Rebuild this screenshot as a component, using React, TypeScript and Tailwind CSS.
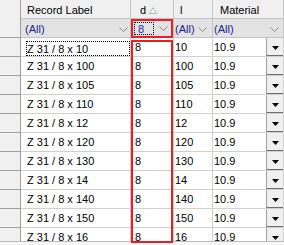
import React from "react";

const rows = ["10", "100", "105", "110", "12", "120", "130", "14", "140", "150", "16"];

const Chevron: React.FC = () => (
  <svg width="9" height="5" viewBox="0 0 9 5" className="shrink-0">
    <polyline points="0.5,0.5 4.5,4.5 8.5,0.5" fill="none" stroke="#8a8a8a" strokeWidth="1" />
  </svg>
);

const SortUp: React.FC = () => (
  <svg width="8" height="7" viewBox="0 0 8 7" className="ml-[3px] shrink-0">
    <polygon points="4,0.5 7.5,6.5 0.5,6.5" fill="#fcfcfc" stroke="#b4b4b4" strokeWidth="1" />
  </svg>
);

const DropButton: React.FC = () => (
  <div className="ml-auto w-[17px] self-stretch flex items-center justify-center bg-[#f0f0f0] border-l border-l-[#a0a0a0] border-b border-b-[#6e6e6e] pt-[2px]">
    <svg width="7" height="4" viewBox="0 0 7 4">
      <polygon points="0,0 7,0 3.5,4" fill="#000" />
    </svg>
  </div>
);

const App: React.FC = () => {
  return (
    <div className="relative w-[284px] h-[245px] overflow-hidden bg-[#f7f7f7] font-['Liberation_Sans',Arial,sans-serif] text-[11px] text-black leading-none">
      <div className="h-[242px] overflow-hidden bg-white border-b border-[#bdbdbd]">
        {/* header + filter rows */}
        <div className="flex">
          <div className="w-[21px] h-[38px] bg-[#f0f0f0] border-r border-b border-[#a0a0a0]" />
          <div className="flex flex-col">
            <div className="flex h-[19px] bg-[#f0f0f0]">
              <div className="w-[110px] flex items-center pl-[6px] pt-[2px] border-r border-b border-[#c4c4c4]">Record Label</div>
              <div className="w-[43px] flex items-center pl-[9px] pt-[2px] border-r border-b border-[#c4c4c4]">
                d<SortUp />
              </div>
              <div className="w-[39px] flex items-center pl-[6px] pt-[2px] border-r border-b border-[#c4c4c4]">l</div>
              <div className="w-[71px] flex items-center pl-[7px] pt-[2px] border-r border-b border-[#c4c4c4]">Material</div>
            </div>
            <div className="flex h-[19px] bg-[#e3e3e3] text-[#1c1c8e]">
              <div className="w-[110px] flex items-center justify-between pl-[4px] pr-[2px] pt-[2px] border-r border-b border-[#c4c4c4]">
                (All)<Chevron />
              </div>
              <div className="w-[43px] flex items-center justify-between pl-[3px] pr-[5px] border-r border-b border-[#c4c4c4]">
                <div className="w-[20px] h-[13px] flex items-center pl-[3px] pt-[2px] border border-dotted border-black text-[#2424c8]">8</div>
                <Chevron />
              </div>
              <div className="w-[39px] flex items-center justify-between pl-[1px] pr-[5px] pt-[2px] border-r border-b border-[#c4c4c4]">
                (All)<Chevron />
              </div>
              <div className="w-[71px] flex items-center justify-between pl-[1px] pr-[4px] pt-[2px] border-r border-b border-[#c4c4c4]">
                (All)<Chevron />
              </div>
            </div>
          </div>
        </div>

        {/* data rows */}
        {rows.map((l, i) => (
          <div key={l} className="flex h-[19px]">
            <div className="w-[21px] bg-[#f0f0f0] border-r border-b border-[#a0a0a0]" />
            {i === 0 ? (
              <div className="w-[110px] flex pl-[5px] pt-[3px] border-r border-b border-[#d0d0d0]">
                <div className="flex-1 flex items-center pt-[1px] border border-dotted border-black">Z 31 / 8 x {l}</div>
              </div>
            ) : (
              <div className="w-[110px] flex items-center pl-[6px] pt-[1px] border-r border-b border-[#d0d0d0]">Z 31 / 8 x {l}</div>
            )}
            <div className="w-[43px] flex items-center pl-[4px] pt-[1px] border-r border-b border-[#d0d0d0]">8</div>
            <div className="w-[39px] flex items-center pl-[1px] pt-[1px] border-r border-b border-[#d0d0d0]">{l}</div>
            <div className="w-[71px] flex items-center pl-[1px] border-r border-b border-[#d0d0d0]">
              <span className="pt-[1px]">10.9</span>
              <DropButton />
            </div>
          </div>
        ))}
      </div>

      {/* red highlight annotations */}
      <div className="absolute left-[131px] top-[19px] w-[42px] h-[19px] border-2 border-[#ec1c24]" />
      <div className="absolute left-[131px] top-[40px] w-[42px] h-[203px] border-2 border-[#ec1c24]" />
    </div>
  );
};

export default App;
